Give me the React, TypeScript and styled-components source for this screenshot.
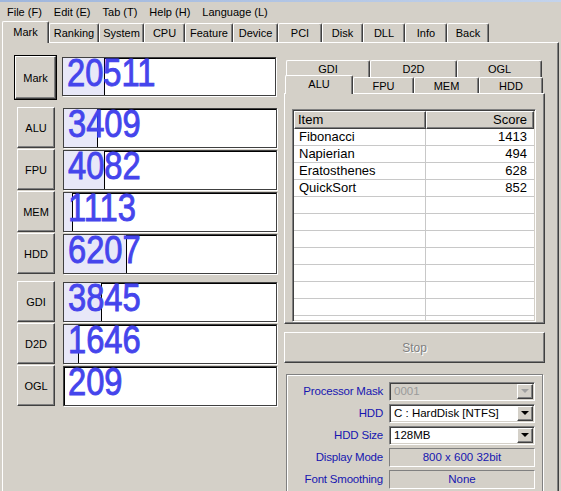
import React from "react";
import styled, { createGlobalStyle } from "styled-components";

const GlobalStyle = createGlobalStyle`
  html, body { margin: 0; padding: 0; background: #d4d0c8; }
  body { font-family: "Liberation Sans", Arial, sans-serif; }
  * { box-sizing: border-box; }
`;

const Window = styled.div`
  width: 561px;
  height: 491px;
  overflow: hidden;
  background: #d4d0c8;
  display: flex;
  flex-direction: column;
  font-size: 11px;
  color: #000;
`;

const TitleEdge = styled.div`
  height: 2px;
  flex-shrink: 0;
  background: linear-gradient(90deg, #9fb6dc, #c3d3ec);
`;

const MenuBar = styled.div`
  height: 19px;
  flex-shrink: 0;
  display: flex;
  align-items: center;
  padding-left: 1px;
`;

const MenuItem = styled.span`
  padding: 0 6px;
`;

const TabStrip = styled.div`
  height: 21px;
  flex-shrink: 0;
  display: flex;
  align-items: flex-end;
  padding-left: 2px;
`;

const Tab = styled.div<{ $active?: boolean; $w: number }>`
  width: ${({ $w }) => $w}px;
  height: ${({ $active }) => ($active ? 22 : 19)}px;
  margin-bottom: ${({ $active }) => ($active ? -1 : 0)}px;
  position: relative;
  z-index: ${({ $active }) => ($active ? 1 : 0)};
  background: #d4d0c8;
  border-top: 1px solid #fff;
  border-left: 1px solid #fff;
  border-right: 1px solid #404040;
  box-shadow: inset -1px 0 #808080;
  border-radius: 2px 2px 0 0;
  display: flex;
  align-items: center;
  justify-content: center;
  padding-bottom: ${({ $active }) => ($active ? 2 : 0)}px;
`;

const Panel = styled.div`
  flex: 1;
  width: 557px;
  margin-left: 2px;
  border-top: 1px solid #fff;
  border-left: 1px solid #fff;
  border-right: 1px solid #404040;
  box-shadow: inset -1px 0 #808080;
  display: flex;
  padding: 12px 0 0 11px;
`;

const LeftCol = styled.div`
  width: 263px;
  display: flex;
  flex-direction: column;
`;

const MarkRow = styled.div`
  display: flex;
  align-items: flex-start;
  height: 45px;
`;

const DefaultFrame = styled.div`
  width: 43px;
  height: 45px;
  border: 1px solid #000;
  display: flex;
`;

const RaisedButton = styled.div<{ $w?: number; $h?: number }>`
  width: ${({ $w }) => ($w ? `${$w}px` : "100%")};
  height: ${({ $h }) => ($h ? `${$h}px` : "100%")};
  background: #d4d0c8;
  border-top: 1px solid #fff;
  border-left: 1px solid #fff;
  border-right: 1px solid #404040;
  border-bottom: 1px solid #404040;
  box-shadow: inset -1px -1px #808080;
  display: flex;
  align-items: center;
  justify-content: center;
  font-size: 11px;
  flex-shrink: 0;
`;

const ScoreGroup = styled.div<{ $top: number }>`
  display: flex;
  flex-direction: column;
  margin-top: ${({ $top }) => $top}px;
`;

const ScoreRow = styled.div`
  display: flex;
  height: 42px;
  padding-left: 3px;
  align-items: flex-start;
`;

const ScoreBox = styled.div<{ $gap: number; $top: number; $h: number }>`
  position: relative;
  margin-left: ${({ $gap }) => $gap}px;
  margin-top: ${({ $top }) => $top}px;
  width: 214px;
  height: ${({ $h }) => $h}px;
  background: #fff;
  border: 1px solid #404040;
  box-shadow: inset 1px 1px #000, 1px 1px #fff;
`;

const Bar = styled.div`
  position: absolute;
  left: 0;
  top: 0;
  bottom: 0;
  background: #e8e8f8;
  border-right: 1px solid #000;
`;

const ScoreText = styled.div`
  position: relative;
  display: inline-block;
  font-size: 38px;
  line-height: 30px;
  color: #4545ec;
  -webkit-text-stroke: 0.9px #4545ec;
  margin: 0 0 0 4px;
  transform: scaleX(0.86);
  transform-origin: left center;
  white-space: nowrap;
`;

const RightCol = styled.div`
  width: 261px;
  margin-left: 7px;
  display: flex;
  flex-direction: column;
  padding-top: 5px;
`;

const SubTabRow = styled.div<{ $pad: number; $h: number }>`
  display: flex;
  align-items: flex-end;
  padding-left: ${({ $pad }) => $pad}px;
  height: ${({ $h }) => $h}px;
`;

const SubTab = styled.div<{ $w: number; $active?: boolean; $h: number }>`
  width: ${({ $w }) => $w}px;
  height: ${({ $h }) => $h}px;
  margin-bottom: ${({ $active }) => ($active ? -1 : 0)}px;
  position: relative;
  z-index: ${({ $active }) => ($active ? 1 : 0)};
  background: #d4d0c8;
  border-top: 1px solid #fff;
  border-left: 1px solid #fff;
  border-right: 1px solid #404040;
  box-shadow: inset -1px 0 #808080;
  border-radius: 2px 2px 0 0;
  display: flex;
  align-items: center;
  justify-content: center;
  padding-bottom: ${({ $active }) => ($active ? 3 : 0)}px;
`;

const SubPanel = styled.div`
  height: 231px;
  border-top: 1px solid #fff;
  border-left: 1px solid #fff;
  border-right: 1px solid #404040;
  border-bottom: 1px solid #404040;
  box-shadow: inset -1px -1px #808080;
  padding: 15px 0 0 7px;
`;

const ListView = styled.div`
  width: 244px;
  height: 213px;
  background: #fff;
  border-top: 1px solid #808080;
  border-left: 1px solid #808080;
  border-right: 1px solid #fff;
  border-bottom: 1px solid #fff;
  box-shadow: inset 1px 1px #404040, inset -1px -1px #d4d0c8;
  padding: 1px;
  overflow: hidden;
  font-size: 13px;
`;

const ListHeader = styled.div`
  display: grid;
  grid-template-columns: 132px 1fr;
  height: 18px;
`;

const HeaderCell = styled.div<{ $right?: boolean }>`
  background: #d4d0c8;
  border-top: 1px solid #fff;
  border-left: 1px solid #fff;
  border-right: 1px solid #404040;
  border-bottom: 1px solid #404040;
  box-shadow: inset -1px -1px #808080;
  line-height: 15px;
  padding: ${({ $right }) => ($right ? "0 6px 0 0" : "0 0 0 3px")};
  text-align: ${({ $right }) => ($right ? "right" : "left")};
`;

const ListRow = styled.div`
  display: grid;
  grid-template-columns: 132px 1fr;
  height: 17px;
  border-bottom: 1px solid #c8c8c8;
`;

const ListCell = styled.div<{ $right?: boolean }>`
  line-height: 16px;
  white-space: nowrap;
  padding: ${({ $right }) => ($right ? "0 7px 0 0" : "0 0 0 5px")};
  text-align: ${({ $right }) => ($right ? "right" : "left")};
  border-right: ${({ $right }) => ($right ? "none" : "1px solid #c8c8c8")};
`;

const StopButton = styled(RaisedButton)`
  margin-top: 8px;
  font-size: 12px;
  color: #808080;
  text-shadow: 1px 1px #fff;
`;

const GroupBox = styled.div`
  margin: 11px 2px 0;
  height: 130px;
  border: 1px solid #808080;
  box-shadow: inset 1px 1px #fff, 1px 1px #fff;
  padding-top: 6px;
  display: flex;
  flex-direction: column;
  gap: 2px;
`;

const FieldRow = styled.div`
  display: flex;
  align-items: center;
  height: 20px;
`;

const FieldLabel = styled.div`
  width: 96px;
  text-align: right;
  color: #1616b0;
  font-size: 11.5px;
  letter-spacing: -0.2px;
  white-space: nowrap;
`;

const Combo = styled.div<{ $disabled?: boolean }>`
  margin-left: 6px;
  width: 146px;
  height: 19px;
  display: flex;
  background: ${({ $disabled }) => ($disabled ? "#d4d0c8" : "#fff")};
  color: ${({ $disabled }) => ($disabled ? "#9a9a9a" : "#000")};
  border-top: 1px solid #808080;
  border-left: 1px solid #808080;
  border-right: 1px solid #fff;
  border-bottom: 1px solid #fff;
  box-shadow: inset 1px 1px #404040, inset -1px -1px #d4d0c8;
  padding: 1px;
`;

const ComboText = styled.div`
  flex: 1;
  padding-left: 3px;
  line-height: 15px;
  font-size: 11.5px;
  white-space: nowrap;
`;

const ArrowButton = styled(RaisedButton)`
  width: 16px;
`;

const Arrow = styled.div<{ $disabled?: boolean }>`
  width: 0;
  height: 0;
  border-left: 4px solid transparent;
  border-right: 4px solid transparent;
  border-top: 4px solid ${({ $disabled }) => ($disabled ? "#a0a0a0" : "#000")};
`;

const ValueBox = styled.div`
  margin-left: 6px;
  width: 146px;
  height: 19px;
  border-top: 1px solid #808080;
  border-left: 1px solid #808080;
  border-right: 1px solid #fff;
  border-bottom: 1px solid #fff;
  text-align: center;
  line-height: 17px;
  color: #1616b0;
  font-size: 11.5px;
`;

const tabs = [
  { label: "Mark", w: 47, active: true },
  { label: "Ranking", w: 50 },
  { label: "System", w: 45 },
  { label: "CPU", w: 41 },
  { label: "Feature", w: 48 },
  { label: "Device", w: 45 },
  { label: "PCI", w: 44 },
  { label: "Disk", w: 41 },
  { label: "DLL", w: 42 },
  { label: "Info", w: 42 },
  { label: "Back", w: 42 },
];

const groupA = [
  { label: "ALU", score: 3409, bar: 34 },
  { label: "FPU", score: 4082, bar: 41 },
  { label: "MEM", score: 1113, bar: 9 },
  { label: "HDD", score: 6207, bar: 63 },
];

const groupB = [
  { label: "GDI", score: 3845, bar: 38 },
  { label: "D2D", score: 1646, bar: 15 },
  { label: "OGL", score: 209, bar: 0 },
];

const results = [
  { item: "Fibonacci", score: 1413 },
  { item: "Napierian", score: 494 },
  { item: "Eratosthenes", score: 628 },
  { item: "QuickSort", score: 852 },
];

function Score({ value, bar }: { value: number; bar: number }) {
  return (
    <>
      <Bar style={{ width: bar }} />
      <ScoreText>{value}</ScoreText>
    </>
  );
}

export default function App() {
  const emptyRows = Array.from({ length: 9 });
  return (
    <Window>
      <GlobalStyle />
      <TitleEdge />
      <MenuBar>
        {["File (F)", "Edit (E)", "Tab (T)", "Help (H)", "Language (L)"].map((m) => (
          <MenuItem key={m}>{m}</MenuItem>
        ))}
      </MenuBar>
      <TabStrip>
        {tabs.map((t) => (
          <Tab key={t.label} $w={t.w} $active={t.active}>
            {t.label}
          </Tab>
        ))}
      </TabStrip>
      <Panel>
        <LeftCol>
          <MarkRow>
            <DefaultFrame>
              <RaisedButton>Mark</RaisedButton>
            </DefaultFrame>
            <ScoreBox $gap={5} $top={2} $h={39}>
              <Score value={20511} bar={42} />
            </ScoreBox>
          </MarkRow>
          <ScoreGroup $top={7}>
            {groupA.map((r) => (
              <ScoreRow key={r.label}>
                <RaisedButton $w={38} $h={41}>{r.label}</RaisedButton>
                <ScoreBox $gap={8} $top={1} $h={40}>
                  <Score value={r.score} bar={r.bar} />
                </ScoreBox>
              </ScoreRow>
            ))}
          </ScoreGroup>
          <ScoreGroup $top={6}>
            {groupB.map((r) => (
              <ScoreRow key={r.label}>
                <RaisedButton $w={38} $h={41}>{r.label}</RaisedButton>
                <ScoreBox $gap={8} $top={1} $h={40}>
                  <Score value={r.score} bar={r.bar} />
                </ScoreBox>
              </ScoreRow>
            ))}
          </ScoreGroup>
        </LeftCol>
        <RightCol>
          <SubTabRow $pad={2} $h={17}>
            <SubTab $w={84} $h={17}>GDI</SubTab>
            <SubTab $w={87} $h={17}>D2D</SubTab>
            <SubTab $w={85} $h={17}>OGL</SubTab>
          </SubTabRow>
          <SubTabRow $pad={1} $h={16}>
            <SubTab $w={68} $h={19} $active>ALU</SubTab>
            <SubTab $w={61} $h={16}>FPU</SubTab>
            <SubTab $w={65} $h={16}>MEM</SubTab>
            <SubTab $w={64} $h={16}>HDD</SubTab>
          </SubTabRow>
          <SubPanel>
            <ListView>
              <ListHeader>
                <HeaderCell>Item</HeaderCell>
                <HeaderCell $right>Score</HeaderCell>
              </ListHeader>
              {results.map((r) => (
                <ListRow key={r.item}>
                  <ListCell>{r.item}</ListCell>
                  <ListCell $right>{r.score}</ListCell>
                </ListRow>
              ))}
              {emptyRows.map((_, i) => (
                <ListRow key={i}>
                  <ListCell />
                  <ListCell $right />
                </ListRow>
              ))}
            </ListView>
          </SubPanel>
          <StopButton $h={31}>Stop</StopButton>
          <GroupBox>
            <FieldRow>
              <FieldLabel>Processor Mask</FieldLabel>
              <Combo $disabled>
                <ComboText>0001</ComboText>
                <ArrowButton>
                  <Arrow $disabled />
                </ArrowButton>
              </Combo>
            </FieldRow>
            <FieldRow>
              <FieldLabel>HDD</FieldLabel>
              <Combo>
                <ComboText>C : HardDisk [NTFS]</ComboText>
                <ArrowButton>
                  <Arrow />
                </ArrowButton>
              </Combo>
            </FieldRow>
            <FieldRow>
              <FieldLabel>HDD Size</FieldLabel>
              <Combo>
                <ComboText>128MB</ComboText>
                <ArrowButton>
                  <Arrow />
                </ArrowButton>
              </Combo>
            </FieldRow>
            <FieldRow>
              <FieldLabel>Display Mode</FieldLabel>
              <ValueBox>800 x 600 32bit</ValueBox>
            </FieldRow>
            <FieldRow>
              <FieldLabel>Font Smoothing</FieldLabel>
              <ValueBox>None</ValueBox>
            </FieldRow>
          </GroupBox>
        </RightCol>
      </Panel>
    </Window>
  );
}
